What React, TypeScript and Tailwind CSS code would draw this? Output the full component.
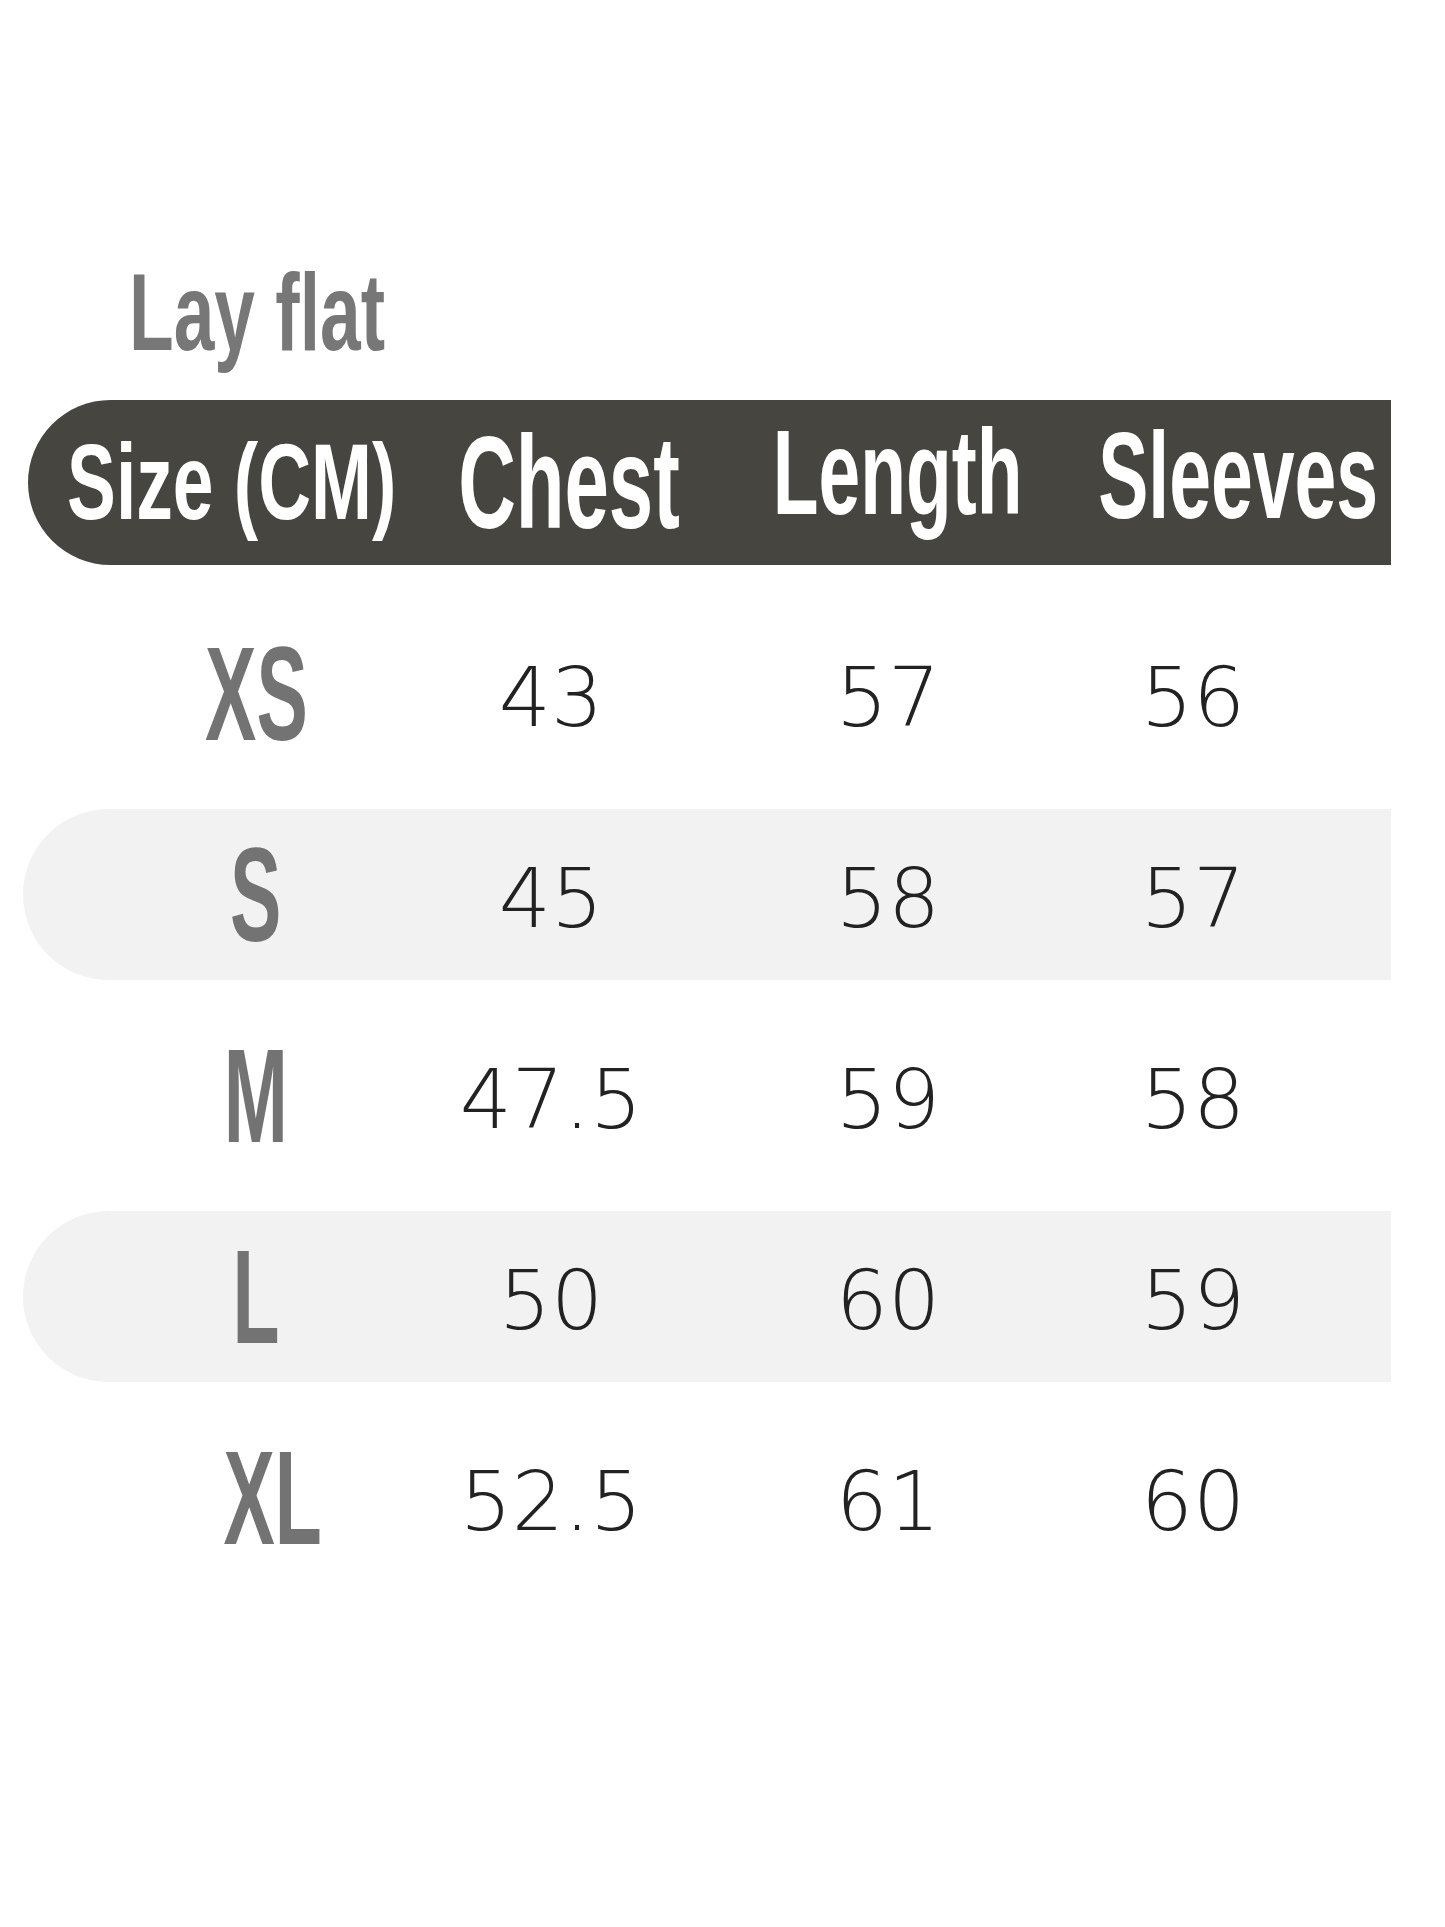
import React from "react";

const cond = "font-['Liberation_Sans',sans-serif] font-bold";
const num = "font-['DejaVu_Sans','Liberation_Sans',sans-serif] font-light";

const rows = [
  { s: "XS", c: "43", l: "57", sl: "56", band: false, off: "" },
  { s: "S", c: "45", l: "58", sl: "57", band: true, off: "" },
  { s: "M", c: "47.5", l: "59", sl: "58", band: false, off: "" },
  { s: "L", c: "50", l: "60", sl: "59", band: true, off: "" },
  { s: "XL", c: "52.5", l: "61", sl: "60", band: false, off: "ml-[34px]" },
];

function Num({ v }: { v: string }) {
  return (
    <div className="w-[240px] flex justify-center mt-[8px]">
      <span className={`${num} text-[82px] leading-none text-[#222222] whitespace-nowrap`}>{v}</span>
    </div>
  );
}

export default function App() {
  return (
    <div className="w-[1445px] h-[1927px] bg-white pt-[258px]">
      <div className="h-[109px] pl-[129px]">
        <span className={`${cond} inline-block origin-left scale-x-[0.671] text-[109px] leading-none text-[#777777] whitespace-nowrap`}>
          Lay flat
        </span>
      </div>

      <div className="mt-[33px] ml-[28px] w-[1363px] h-[165px] rounded-l-full bg-[#46453f] flex items-center">
        <div className="w-[408px] flex justify-center">
          <span className={`${cond} inline-block scale-x-[0.684] text-[107px] leading-none text-white whitespace-nowrap`}>Size (CM)</span>
        </div>
        <div className="w-[254px] flex justify-center pl-[12px]">
          <span className={`${cond} inline-block scale-x-[0.609] text-[131px] leading-none text-white whitespace-nowrap`}>Chest</span>
        </div>
        <div className="w-[396px] flex justify-center mb-[20px] pl-[20px]">
          <span className={`${cond} inline-block scale-x-[0.619] text-[121px] leading-none text-white whitespace-nowrap`}>Length</span>
        </div>
        <div className="w-[304px] flex justify-center mb-[14px]">
          <span className={`${cond} inline-block scale-x-[0.611] text-[123px] leading-none text-white whitespace-nowrap`}>Sleeves</span>
        </div>
      </div>

      <div className="mt-[43px] flex flex-col gap-[30px]">
        {rows.map((r) => (
          <div
            key={r.s}
            className={`ml-[23px] w-[1368px] h-[171px] flex items-center ${r.band ? "bg-[#f2f2f2] rounded-l-full" : ""}`}
          >
            <div className="w-[466px] flex justify-center">
              <span className={`${cond} ${r.off} inline-block scale-x-[0.574] text-[134px] leading-none text-[#737373] whitespace-nowrap`}>
                {r.s}
              </span>
            </div>
            <div className="ml-[-58px] flex">
              <Num v={r.c} />
              <div className="w-[97px]" />
              <Num v={r.l} />
              <div className="w-[65px]" />
              <Num v={r.sl} />
            </div>
          </div>
        ))}
      </div>
    </div>
  );
}
